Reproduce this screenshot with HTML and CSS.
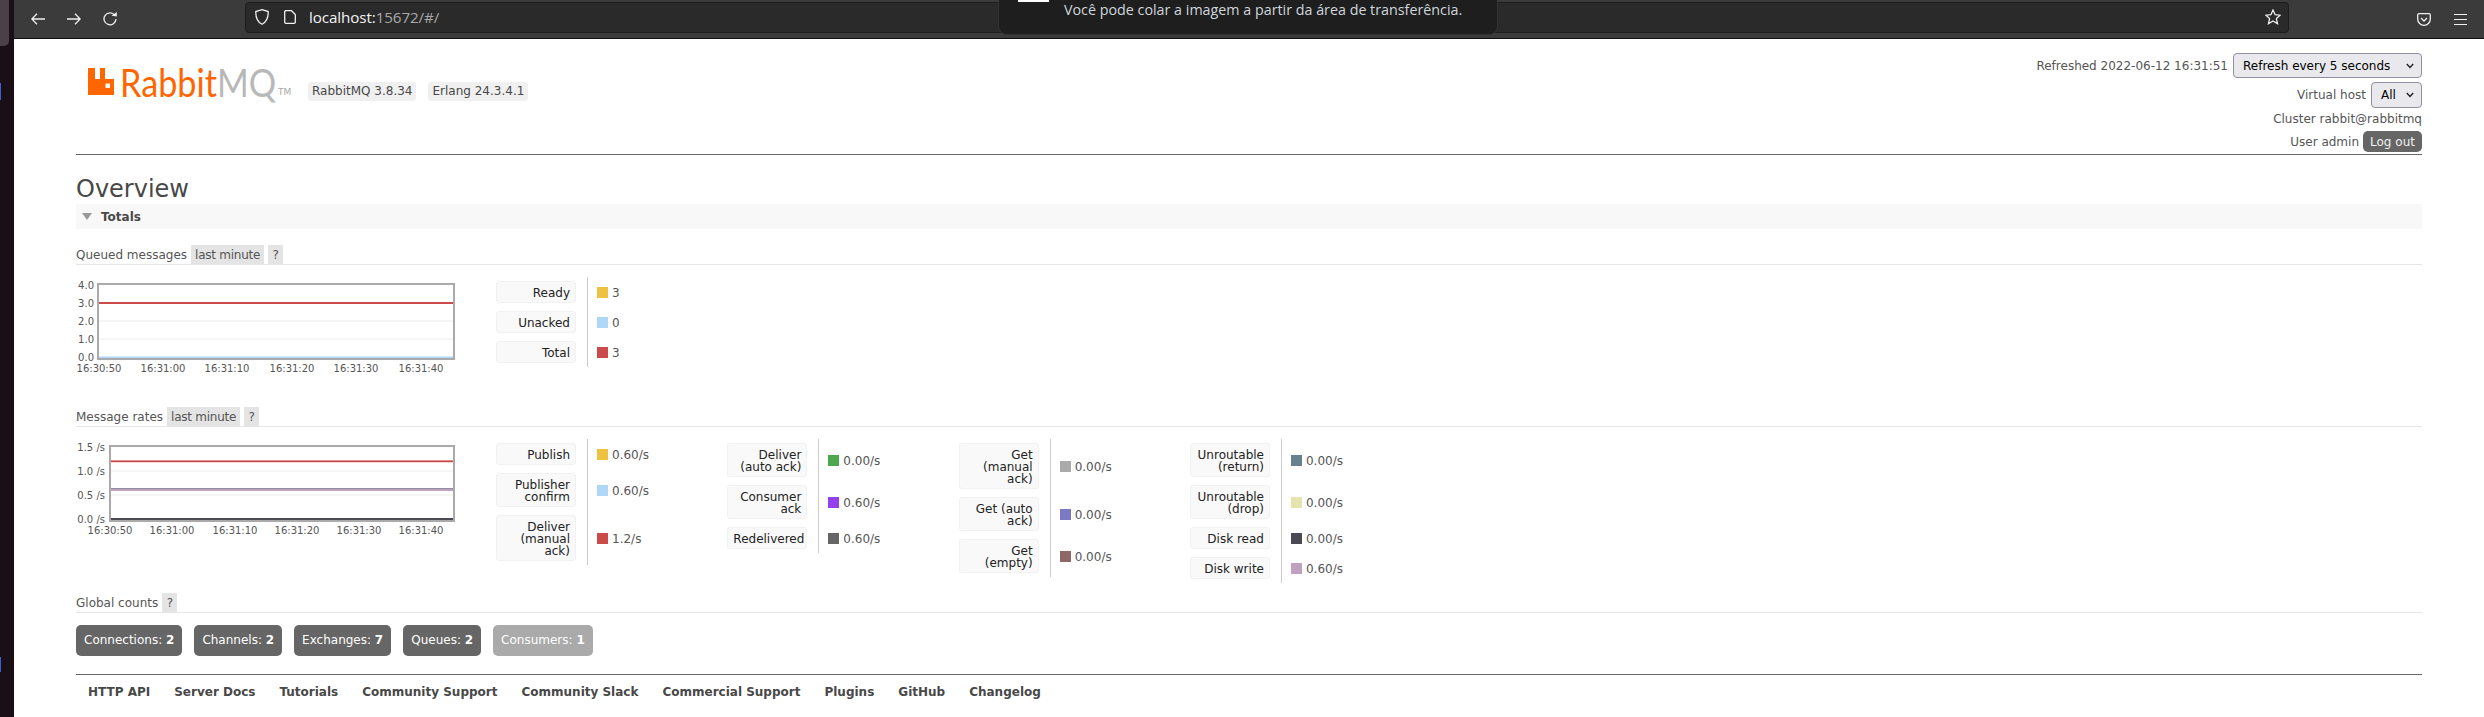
FILE: index.html
```html
<!DOCTYPE html>
<html lang="en">
<head>
<meta charset="utf-8">
<title>RabbitMQ Management</title>
<link rel="stylesheet" href="styles.css">
</head>
<body>
<aside class="dock"><i class="dock-tile"></i><i class="dock-mark dock-mark-a"></i><i class="dock-mark dock-mark-b"></i></aside>
<div class="window">
  <nav class="toolbar">
    <svg class="tb-icon back" viewBox="0 0 14 12"><path d="M14 6H1M6 .7 .8 6 6 11.3"/></svg>
    <svg class="tb-icon forward" viewBox="0 0 14 12"><path d="M0 6H13M8 .7 13.2 6 8 11.3"/></svg>
    <svg class="tb-icon reload" viewBox="0 0 14 14"><path d="M11.8 3.2A6 6 0 1 0 13 7"/><path class="fill" d="M8.5 3.8 13.8 0V4.6Z"/></svg>
    <div class="urlbar">
      <svg class="shield" viewBox="0 0 14 16"><path d="M7 .7 13.2 2.6C13.4 8.500 11.500 12.800 7 15.300 2.500 12.800 .6 8.500 .8 2.600Z"/></svg>
      <svg class="page-icon" viewBox="0 0 12 14"><path d="M1.500 .7H7.500L11.300 4.500V12A1.300 1.300 0 0 1 10 13.300H2A1.300 1.300 0 0 1 .7 12V1.500Z"/></svg>
      <span class="url"><span class="host">localhost:</span>15672/#/</span>
      <svg class="star" viewBox="0 0 16 16"><path d="M8 1 10.100 5.700 15.200 6.200 11.400 9.600 12.500 14.700 8 12 3.500 14.700 4.600 9.600 .8 6.200 5.900 5.700Z"/></svg>
    </div>
    <svg class="pocket" viewBox="0 0 14 13"><path d="M2 .7H12A1.300 1.300 0 0 1 13.300 2V6A6.300 6.300 0 0 1 .7 6V2A1.300 1.300 0 0 1 2 .7Z"/><path d="M4 5 7 8 10 5"/></svg>
    <div class="hamburger"><i></i><i></i><i></i></div>
    <div class="paste-hint"><i class="hint-thumb"></i><span>Você pode colar a imagem a partir da área de transferência.</span></div>
  </nav>
  <main class="page">
    <header class="masthead">
      <div class="brand">
        <div class="logo">
          <svg class="logo-mark" viewBox="0 0 26 27"><path fill-rule="evenodd" d="M0 0H7V11H12V0H17V11H26V27H0ZM17.500 15.500V20H22V15.500Z"/></svg>
          <span class="logo-text"><span class="logo-rabbit">Rabbit</span>MQ</span><span class="logo-tm">TM</span>
        </div>
        <span class="badge badge-first">RabbitMQ 3.8.34</span>
        <span class="badge">Erlang 24.3.4.1</span>
      </div>
      <div class="status">
        <div class="status-row row-refresh">Refreshed 2022-06-12 16:31:51
          <div class="select select-wide">Refresh every 5 seconds<svg viewBox="0 0 8 6"><path d="M.8 1 4 4.500 7.200 1"/></svg></div>
        </div>
        <div class="status-row row-vhost">Virtual host
          <div class="select select-small">All<svg viewBox="0 0 8 6"><path d="M.8 1 4 4.500 7.200 1"/></svg></div>
        </div>
        <div class="status-row row-cluster">Cluster rabbit@rabbitmq</div>
        <div class="status-row row-user">User admin <button class="logout">Log out</button></div>
      </div>
    </header>

    <h1>Overview</h1>
    <div class="totals"><i class="caret"></i>Totals</div>

    <h3 class="sub first-sub">Queued messages <span class="tag">last minute</span> <span class="tag tag-q">?</span></h3>
    <section class="chart-row row-queued">
      <svg class="chart" viewBox="0 0 420 112">
        <line class="grid" x1="23" x2="377" y1="74" y2="74"/>
        <line class="grid" x1="23" x2="377" y1="56" y2="56"/>
        <line x1="23" x2="377" y1="38" y2="38" stroke="#cb4b4b" stroke-width="2"/>
        <line x1="23" x2="377" y1="92.500" y2="92.500" stroke="#afd8f8" stroke-width="2"/>
        <rect class="plot" x="22" y="19" width="356" height="75"/>
        <g class="y-labels">
          <text x="18" y="23.500">4.0</text><text x="18" y="41.500">3.0</text><text x="18" y="59.500">2.0</text><text x="18" y="77.500">1.0</text><text x="18" y="95.500">0.0</text>
        </g>
        <g class="x-labels">
          <text x="23" y="107">16:30:50</text><text x="87" y="107">16:31:00</text><text x="151" y="107">16:31:10</text><text x="216" y="107">16:31:20</text><text x="280" y="107">16:31:30</text><text x="345" y="107">16:31:40</text>
        </g>
      </svg>
      <div class="legend">
        <div class="lbl">Ready</div><div class="val"><i class="sw c-yellow"></i>3</div>
        <div class="lbl">Unacked</div><div class="val"><i class="sw c-blue"></i>0</div>
        <div class="lbl">Total</div><div class="val"><i class="sw c-red"></i>3</div>
      </div>
    </section>

    <h3 class="sub">Message rates <span class="tag">last minute</span> <span class="tag tag-q">?</span></h3>
    <section class="chart-row">
      <svg class="chart" viewBox="0 0 420 112">
        <line class="grid" x1="35" x2="377" y1="44" y2="44"/>
        <line class="grid" x1="35" x2="377" y1="68" y2="68"/>
        <line x1="35" x2="377" y1="33.500" y2="33.500" stroke="#e8a5a5" stroke-width="1"/>
        <line x1="35" x2="377" y1="34.500" y2="34.500" stroke="#cb4b4b" stroke-width="1.500"/>
        <line x1="35" x2="377" y1="62.500" y2="62.500" stroke="#bfa1c0" stroke-width="3"/>
        <line x1="35" x2="377" y1="61.500" y2="61.500" stroke="#8e8e9e" stroke-width="1"/>
        <line x1="35" x2="377" y1="92" y2="92" stroke="#4a4a55" stroke-width="2"/>
        <rect class="plot" x="34" y="19" width="344" height="75"/>
        <g class="y-labels">
          <text x="29" y="23.500">1.5 /s</text><text x="29" y="47.500">1.0 /s</text><text x="29" y="71.500">0.5 /s</text><text x="29" y="95.500">0.0 /s</text>
        </g>
        <g class="x-labels">
          <text x="34" y="107">16:30:50</text><text x="96" y="107">16:31:00</text><text x="159" y="107">16:31:10</text><text x="221" y="107">16:31:20</text><text x="283" y="107">16:31:30</text><text x="345" y="107">16:31:40</text>
        </g>
      </svg>
      <div class="legend">
        <div class="lbl">Publish</div><div class="val"><i class="sw c-yellow"></i>0.60/s</div>
        <div class="lbl">Publisher confirm</div><div class="val"><i class="sw c-blue"></i>0.60/s</div>
        <div class="lbl">Deliver (manual ack)</div><div class="val"><i class="sw c-red"></i>1.2/s</div>
      </div>
      <div class="legend">
        <div class="lbl">Deliver (auto ack)</div><div class="val"><i class="sw c-green"></i>0.00/s</div>
        <div class="lbl">Consumer ack</div><div class="val"><i class="sw c-purple"></i>0.60/s</div>
        <div class="lbl">Redelivered</div><div class="val"><i class="sw c-dim"></i>0.60/s</div>
      </div>
      <div class="legend">
        <div class="lbl">Get (manual ack)</div><div class="val"><i class="sw c-grey"></i>0.00/s</div>
        <div class="lbl">Get (auto ack)</div><div class="val"><i class="sw c-indigo"></i>0.00/s</div>
        <div class="lbl">Get (empty)</div><div class="val"><i class="sw c-brown"></i>0.00/s</div>
      </div>
      <div class="legend">
        <div class="lbl">Unroutable (return)</div><div class="val"><i class="sw c-slate"></i>0.00/s</div>
        <div class="lbl">Unroutable (drop)</div><div class="val"><i class="sw c-khaki"></i>0.00/s</div>
        <div class="lbl">Disk read</div><div class="val"><i class="sw c-ink"></i>0.00/s</div>
        <div class="lbl">Disk write</div><div class="val"><i class="sw c-mauve"></i>0.60/s</div>
      </div>
    </section>

    <h3 class="sub sub-counts">Global counts <span class="tag tag-q">?</span></h3>
    <div class="counts">
      <a class="count">Connections: <b>2</b></a>
      <a class="count">Channels: <b>2</b></a>
      <a class="count">Exchanges: <b>7</b></a>
      <a class="count">Queues: <b>2</b></a>
      <a class="count count-muted">Consumers: <b>1</b></a>
    </div>

    <footer class="footer">
      <a>HTTP API</a><a>Server Docs</a><a>Tutorials</a><a>Community Support</a><a>Community Slack</a><a>Commercial Support</a><a>Plugins</a><a>GitHub</a><a>Changelog</a>
    </footer>
  </main>
</div>
</body>
</html>
```
FILE: styles.css
```css
* { box-sizing: border-box; }
html, body { margin: 0; height: 717px; overflow: hidden; }
body { display: flex; background: #fff; font-family: "DejaVu Sans", sans-serif; font-size: 12px; color: #484848; }

.dock { position: relative; width: 14px; flex: none; background: #1a0f16; }
.dock-tile { position: absolute; left: 0; top: 0; width: 9px; height: 46px; background: #4b4048; border-bottom-right-radius: 5px; }
.dock-mark { position: absolute; left: 0; width: 1px; background: #3f5fd0; }
.dock-mark-a { top: 83px; height: 17px; }
.dock-mark-b { top: 657px; height: 15px; }

.window { flex: 1; min-width: 0; display: flex; flex-direction: column; }

.toolbar { position: relative; height: 39px; flex: none; display: flex; align-items: center; background: #3b3b3b; border-bottom: 1px solid #0f0f0f; }
.tb-icon, .star, .shield, .page-icon, .pocket { fill: none; stroke: #f0f0f0; stroke-width: 1.300; flex: none; }
.tb-icon .fill { fill: #f0f0f0; stroke: none; }
.back { width: 14px; height: 12px; margin-left: 17px; }
.forward { width: 14px; height: 12px; margin-left: 22px; }
.reload { width: 14px; height: 14px; margin-left: 22px; }
.urlbar { display: flex; align-items: center; width: 2044px; height: 31px; margin: -4px 0 0 128px; padding-left: 9px; background: #2a2a2a; border: 1px solid #1d1d1d; border-radius: 4px; }
.shield { width: 14px; height: 16px; }
.page-icon { width: 12px; height: 14px; margin-left: 15px; }
.url { margin-left: 13px; font-family: "Open Sans", sans-serif; font-size: 15.200px; letter-spacing: -.1px; color: #a8a8a8; }
.host { color: #f2f2f2; }
.star { width: 16px; height: 16px; margin-left: auto; margin-right: 7px; }
.pocket { width: 14px; height: 13px; margin-left: 128px; }
.hamburger { display: flex; flex-direction: column; gap: 4px; width: 13px; margin-left: 23px; }
.hamburger i { height: 1px; background: #f0f0f0; }
.paste-hint { position: absolute; left: 984px; top: 0; width: 500px; height: 35px; background: #1e1e1e; border: 1px solid #333; border-top: 0; border-radius: 0 0 9px 9px; }
.paste-hint span { position: absolute; left: 65px; top: 0; font-family: "Open Sans", sans-serif; font-size: 14.300px; line-height: 19px; white-space: nowrap; color: #cfd6dc; }
.hint-thumb { position: absolute; left: 19px; top: 0; width: 31px; height: 2px; background: #fff; }

.page { flex: 1; min-height: 0; padding: 0 62px; }

.masthead { display: flex; justify-content: space-between; height: 116px; border-bottom: 1px solid #666; }
.brand { display: flex; align-items: flex-start; padding: 28px 0 0 12px; }
.logo { display: flex; align-items: flex-start; width: 220px; height: 36px; color: #b8b8b8; }
.logo-mark { width: 26px; height: 27px; flex: none; fill: #f60; margin-top: 1px; }
.logo-text { display: inline-block; width: 153px; margin-left: 6px; font-family: "Lato", sans-serif; font-weight: 400; font-size: 38px; line-height: 30px; white-space: nowrap; transform: scaleX(.9); transform-origin: left center; }
.logo-rabbit { color: #f60; }
.logo-tm { margin: 21px 0 0 5px; font-size: 9px; line-height: 8px; color: #aaa; }
.badge { margin: 15px 12px 0 0; padding: 0 4px; height: 19px; line-height: 19px; background: #f0f0f0; border-radius: 3px; }
.status { display: flex; flex-direction: column; align-items: flex-end; color: #555; padding-top: 14px; }
.status-row { display: flex; align-items: center; white-space: nowrap; }
.row-refresh { height: 25px; gap: 5px; }
.row-vhost { height: 26px; gap: 5px; margin-top: 4px; }
.row-cluster { height: 22px; }
.row-user { height: 21px; gap: 4px; margin-top: 1px; }
.select { display: flex; align-items: center; justify-content: space-between; height: 100%; padding: 0 7px 0 9px; background: #e9e9ed; border: 1px solid #8f8f9d; border-radius: 4px; color: #000; }
.select svg { width: 8px; height: 6px; fill: none; stroke: #222; stroke-width: 1.400; }
.select-wide { width: 189px; }
.select-small { width: 51px; }
.logout { height: 21px; width: 59px; padding: 0; border: 0; border-radius: 5px; background: #666; color: #f0f0f0; font: inherit; }

h1 { margin: 19px 0 0; height: 30px; font-size: 24px; font-weight: 400; line-height: 30px; color: #484848; }
.totals { display: flex; align-items: center; height: 25px; padding-left: 6px; background: #f8f8f8; font-weight: 700; }
.caret { width: 0; height: 0; margin-right: 9px; border: 5px solid transparent; border-top: 7px solid #999; border-bottom: 0; }

.sub { display: flex; margin: 40px 0 0; height: 20px; gap: 4px; align-items: stretch; line-height: 20px; font-size: 12px; font-weight: 400; color: #555; border-bottom: 1px solid #e6e6e6; white-space: nowrap; }
.first-sub { margin-top: 16px; }
.sub-counts { margin-top: 10px; }
.tag { padding: 0 4px; background: #e4e4e4; letter-spacing: -.25px; }
.tag-q { width: 15px; text-align: center; padding: 0; }

.chart-row { display: flex; align-items: flex-start; padding-top: 12px; }
.chart { width: 420px; height: 112px; flex: none; margin: -12px 0 -12px; }
.plot { fill: none; stroke: #aaa; stroke-width: 2; }
.grid { stroke: #ececec; stroke-width: 1; }
.chart text { font-size: 10px; fill: #555; }
.y-labels text { text-anchor: end; }
.x-labels text { text-anchor: middle; }

.legend { display: grid; grid-template-columns: 91px 1fr; width: 231.330px; flex: none; }
.lbl { width: 80px; margin: 4px 0; padding: 5px 5px 3px; line-height: 12px; text-align: right; color: #222; background: #f9f9f9; border: 1px solid #f1f1f1; border-radius: 3px; }
.val { display: flex; align-items: center; gap: 4px; padding: 1px 0 0 9px; color: #555; border-left: 1px solid #ccc; }
.sw { width: 11px; height: 11px; flex: none; }
.c-yellow { background: #edc240; }
.c-blue { background: #afd8f8; }
.c-red { background: #cb4b4b; }
.c-green { background: #4da74d; }
.c-purple { background: #9440ed; }
.c-dim { background: #666; }
.c-grey { background: #aaa; }
.c-indigo { background: #7c79c3; }
.c-brown { background: #8e6767; }
.c-slate { background: #67808e; }
.c-khaki { background: #e5e4ae; }
.c-ink { background: #4a4a55; }
.c-mauve { background: #bfa1c0; }

.counts { display: flex; gap: 12px; margin-top: 12px; }
.count { height: 31px; line-height: 31px; padding: 0 8px; background: #666; color: #fff; border-radius: 5px; }
.count-muted { background: #aaa; }
.footer { display: flex; margin-top: 18px; padding: 9px 0 0; border-top: 1px solid #666; font-weight: 700; line-height: 16px; color: #484848; }
.footer a { padding: 0 12px; }
```
